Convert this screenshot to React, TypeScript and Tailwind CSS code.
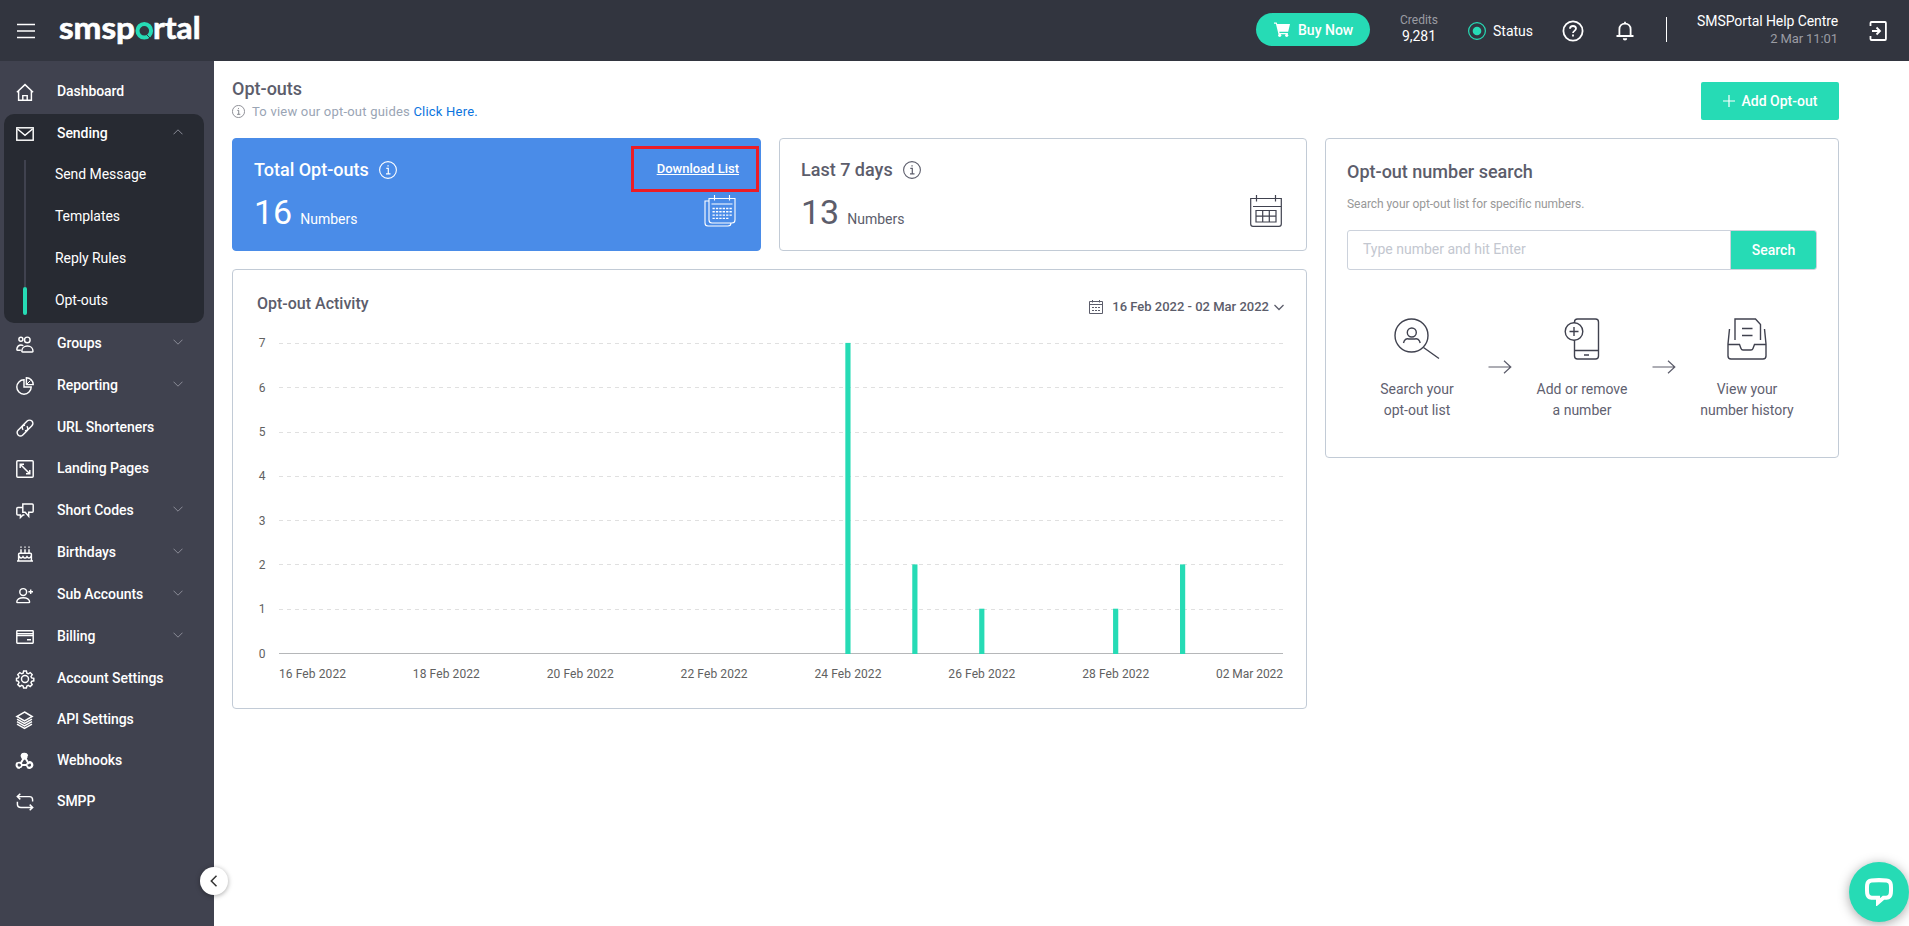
import React from "react";

type IconName =
  | "home" | "mail" | "groups" | "pie" | "link" | "landing" | "chat" | "cake"
  | "userPlus" | "card" | "gear" | "layers" | "webhook" | "loop";

const iconShapes: Record<IconName, React.ReactNode> = {
  home: (
    <>
      <path d="M.9 9.2 9 1.6l8.100 7.600" />
      <path d="M2.600 8v9.200h12.800V8M6.800 17v-4.400h4.400V17" />
    </>
  ),
  mail: (
    <>
      <rect x=".8" y="2.800" width="16.400" height="12.400" />
      <path d="m1.500 4 7.500 6.200L16.500 4" />
    </>
  ),
  groups: (
    <>
      <circle cx="4.900" cy="4.200" r="2" />
      <circle cx="11.300" cy="4.900" r="2.800" />
      <path d="M4.800 15.200H1.600c-.9 0-.8-1-.6-1.900.5-2 2-3.300 3.900-3.300 1 0 1.800.3 2.400.8" />
      <path d="M5.800 16.200c0-3 2.300-5.200 5.600-5.200s5.600 2.200 5.600 5.200c0 .5-.4.700-.8.700H6.600c-.4 0-.8-.2-.8-.7z" />
    </>
  ),
  pie: (
    <>
      <path d="M8 2.800A7.200 7.200 0 1 0 15.200 10H8z" />
      <path d="M10.400.8v6.800h6.800A6.800 6.800 0 0 0 10.400.8z" />
      <path d="m10.500 7.500 4-4" strokeWidth="1" />
    </>
  ),
  link: (
    <>
      <path d="M7.200 10.800a3.300 3.300 0 0 1 0-4.700l4-4a3.300 3.300 0 0 1 4.700 4.700l-4 4a3.300 3.300 0 0 1-3 .9" />
      <path d="M10.800 7.200a3.300 3.300 0 0 1 0 4.700l-4 4a3.300 3.300 0 0 1-4.700-4.700l4-4a3.300 3.300 0 0 1 3-.9" />
    </>
  ),
  landing: (
    <>
      <rect x=".8" y=".8" width="16.400" height="16.400" rx="1" />
      <path d="m4.500 4.500 9 9M4.200 8V4.200H8M10 13.800h3.800V10" />
    </>
  ),
  chat: (
    <>
      <path d="M6.800 2h9.400c.6 0 1 .4 1 1v6.300c0 .6-.4 1-1 1h-3.500v4l-3.500-4H6.800V2z" />
      <path d="M6.800 5.400H1.800c-.6 0-1 .4-1 1V12c0 .6.400 1 1 1h2.600v2.500L7 13h1.400" />
    </>
  ),
  cake: (
    <>
      <path d="M1 17h16M2.600 16.500v-6.300c0-.6.400-1 1-1h10.800c.6 0 1 .4 1 1v6.300M2.800 12c1.600 2.600 3 2.600 4.200.6 1.200 2 2.800 2 4 0 1.200 2 2.800 2 4.200-.6M5 9V5.200M9 9V5.200M13 9V5.200M5 3.700V2.500M9 3.700V2.500M13 3.700V2.500" />
    </>
  ),
  userPlus: (
    <>
      <circle cx="7.200" cy="6" r="3.400" />
      <path d="M.8 16c0-2.500 2.600-4.300 6.400-4.300s6.400 1.800 6.400 4.300c0 .4-.3.600-.6.600H1.400c-.4 0-.6-.2-.6-.6z" />
      <path d="M14.700 3.500v4.600M12.400 5.800H17" />
    </>
  ),
  card: (
    <>
      <rect x=".8" y="2.800" width="16.400" height="12.400" rx=".6" />
      <path d="M1 5.600h16M1 7.400h16M11 11.800h4" />
    </>
  ),
  gear: (
    <>
      <circle cx="9" cy="9" r="3.500" />
      <path d="M7.600 1h2.800l.5 2.200 1.400.6 1.900-1.200 2 2-1.200 1.900.6 1.400 2.200.5v2.400l-2.200.5-.6 1.400 1.200 1.900-2 2-1.900-1.200-1.400.6-.5 2H7.600l-.5-2-1.400-.6-1.900 1.200-2-2L3 12.700l-.6-1.400-1.900-.5V8.400l1.900-.5L3 6.500 1.800 4.600l2-2 1.900 1.200 1.400-.6z" />
    </>
  ),
  layers: (
    <>
      <path d="m8.500 1 7.700 4.500-7.700 4.500L.8 5.500z" />
      <path d="m1 8.200 7.500 4.300L16 8.200M1 10.700l7.500 4.300L16 10.700M1 13.200l7.500 4.100 7.500-4.100" />
    </>
  ),
  webhook: (
    <>
      <circle cx="8.300" cy="4.300" r="2.600" fill="#fff" />
      <circle cx="3.300" cy="13" r="2.500" />
      <circle cx="13.300" cy="13" r="2.500" />
      <path d="M7.600 6.500 4.200 12M9 5.500l4 6.500M5 13h6" strokeWidth="2" />
      <path d="M5.200 4.500a3.200 3.200 0 0 1 6.300-.6M1.200 10.800a3.200 3.200 0 0 0 2.500 5.400M12.800 9.900a3.200 3.200 0 1 1-1.500 5.500" />
    </>
  ),
  loop: (
    <>
      <path d="M4.300.8 1.300 3.600l3 2.800M1.500 3.600h12c2 0 3.100 1.200 3.100 3.200v1.800" />
      <path d="m13.700 11.600 3 2.800-3 2.800M16.500 14.400H5c-2 0-3.600-1.200-3.600-3.200V8.800" />
    </>
  ),
};

function SideIcon({ name }: { name: IconName }) {
  return (
    <svg className="mt-[2px] h-[18px] w-[18px] shrink-0 overflow-visible" viewBox="0 0 18 18" fill="none" stroke="#fff" strokeWidth="1.450">
      {iconShapes[name]}
    </svg>
  );
}

function Chevron({ up = false }: { up?: boolean }) {
  return (
    <svg className="mt-[6px] ml-auto h-[6px] w-[10px]" viewBox="0 0 10 6" fill="none" stroke="#8a8c97" strokeWidth="1">
      <path d={up ? "M.5 5.300 5 .8l4.500 4.500" : "M.5.700 5 5.200 9.500.7"} />
    </svg>
  );
}

const menu: { label: string; icon: IconName; group?: boolean; tall?: boolean }[] = [
  { label: "Groups", icon: "groups", group: true },
  { label: "Reporting", icon: "pie", group: true },
  { label: "URL Shorteners", icon: "link" },
  { label: "Landing Pages", icon: "landing", tall: true },
  { label: "Short Codes", icon: "chat", group: true },
  { label: "Birthdays", icon: "cake", group: true },
  { label: "Sub Accounts", icon: "userPlus", group: true },
  { label: "Billing", icon: "card", group: true },
  { label: "Account Settings", icon: "gear" },
  { label: "API Settings", icon: "layers" },
  { label: "Webhooks", icon: "webhook" },
  { label: "SMPP", icon: "loop" },
];

const sendingItems = ["Send Message", "Templates", "Reply Rules", "Opt-outs"];

function Sidebar() {
  return (
    <aside className="relative w-[214px] shrink-0 bg-[#40424f] text-sm font-medium text-white">
      <div className="flex h-[53px] items-start gap-[23px] pt-5 pl-4 leading-5 tracking-[-0.06px]">
        <SideIcon name="home" />
        <span>Dashboard</span>
      </div>
      <div className="ml-1 h-[209px] w-[200px] rounded-[10px] bg-[#272a32]">
        <div className="flex h-[39px] items-start gap-[23px] pt-[9px] pr-[21px] pl-3 leading-5 tracking-[-0.06px]">
          <SideIcon name="mail" />
          <span>Sending</span>
          <Chevron up />
        </div>
        <div className="flex font-normal">
          <div className="ml-[19px] flex w-1 flex-col items-center pt-[7px]">
            <div className="h-[127px] w-[2px] bg-[#40424f]" />
            <div className="h-[28px] w-1 rounded-[2px] bg-[#26dbb5]" />
          </div>
          <ul className="ml-[28px]">
            {sendingItems.map((item) => (
              <li key={item} className="h-[42px] pt-[11px] leading-5 tracking-[-0.06px]">{item}</li>
            ))}
          </ul>
        </div>
      </div>
      <nav>
        {menu.map((item) => (
          <div key={item.label} className={`flex items-start gap-[23px] pt-[10px] pr-[31px] pl-4 leading-5 tracking-[-0.06px] ${item.group || item.tall ? "h-[42px]" : "h-[41px]"}`}>
            <SideIcon name={item.icon} />
            <span>{item.label}</span>
            {item.group && <Chevron />}
          </div>
        ))}
      </nav>
      <button className="absolute top-[806px] left-[200px] flex h-7 w-7 items-center justify-center rounded-full bg-white shadow-[0_1px_5px_rgba(0,0,0,0.35)]">
        <svg className="h-3 w-2" viewBox="0 0 8 12" fill="none" stroke="#333" strokeWidth="1.500">
          <path d="M6.500.8 1.300 6l5.200 5.200" />
        </svg>
      </button>
    </aside>
  );
}

function Logo() {
  return (
    <div className="ml-6 flex h-[61px] w-[142px] items-center">
      <svg className="h-[61px] w-[142px] overflow-visible" viewBox="0 0 142 61">
        <g fill="#fff" stroke="#fff" strokeWidth=".7" fontFamily="Lato" fontWeight="700" fontSize="31">
          <text x="0" y="39" textLength="76" lengthAdjust="spacingAndGlyphs">smsp</text>
          <text x="94" y="39" textLength="47.500" lengthAdjust="spacingAndGlyphs">rtal</text>
        </g>
        <circle cx="85.300" cy="30.800" r="6.800" fill="none" stroke="#26dbb5" strokeWidth="4" />
        <path d="m87 34 4 4" stroke="#32353f" strokeWidth="1" />
      </svg>
    </div>
  );
}

function Header() {
  return (
    <header className="flex h-[61px] items-center bg-[#32353f] text-white">
      <svg className="ml-[17px] h-4 w-[18px] shrink-0" viewBox="0 0 18 16" stroke="#fff" strokeWidth="1.300">
        <path d="M0 1.500h18M0 8h18M0 14.500h18" />
      </svg>
      <Logo />
      <button className="mb-[2px] ml-auto flex h-[33px] w-[114px] items-center gap-[8px] rounded-full bg-[#26dbb5] pl-[18px] text-sm font-medium">
        <svg className="h-[15px] w-4" viewBox="0 0 16 15" fill="#fff">
          <path d="M0 .5h2.700l.5 1.600H16l-1.800 7.700H5.300l.3 1.200h8.300v1.200H4.500L1.900 1.800H0z" />
          <circle cx="5.700" cy="13.300" r="1.600" />
          <circle cx="12.700" cy="13.300" r="1.600" />
        </svg>
        Buy Now
      </button>
      <div className="ml-[29px] flex w-10 flex-col items-center pb-[5px]">
        <span className="text-xs leading-4 text-[#9a9ca3]">Credits</span>
        <span className="text-sm leading-4">9,281</span>
      </div>
      <svg className="ml-[29px] h-[18px] w-[18px]" viewBox="0 0 18 18">
        <circle cx="9" cy="9" r="8.400" fill="none" stroke="#26dbb5" strokeWidth="1.200" />
        <circle cx="9" cy="9" r="4.300" fill="#26dbb5" />
      </svg>
      <span className="ml-[7px] w-[40px] text-sm">Status</span>
      <svg className="ml-[29px] h-[22px] w-[22px]" viewBox="0 0 22 22" fill="none" stroke="#fff" strokeWidth="1.800">
        <circle cx="11" cy="11" r="9.600" />
        <path d="M8 8.800C8 7 9.300 6 11 6s3 1 3 2.600c0 2.200-3 2.300-3 4.400M11 14.600v1.800" />
      </svg>
      <svg className="ml-[32px] h-[20px] w-[18px]" viewBox="0 0 18 20">
        <path d="M3.400 14.800V8.200C3.400 5 5.800 2.600 9 2.600s5.600 2.400 5.600 5.600v6.600M.5 15h17M9 .8v2" fill="none" stroke="#fff" strokeWidth="1.800" />
        <path d="M6.800 17.300h4.400a2.200 2.200 0 0 1-4.400 0z" fill="#fff" />
      </svg>
      <div className="mb-[2px] ml-[32px] h-[25px] w-px bg-white" />
      <div className="ml-[10px] flex w-[161px] flex-col items-end pb-px">
        <span className="text-sm leading-[17px] tracking-[-0.09px]">SMSPortal Help Centre</span>
        <span className="text-[13px] leading-[17px] tracking-[-0.1px] text-[#9a9ca3]">2 Mar 11:01</span>
      </div>
      <svg className="mr-[22px] ml-[31px] h-[20px] w-[18px]" viewBox="0 0 18 20" fill="none" stroke="#fff" strokeWidth="1.800">
        <path d="M1.500 5V2c0-.6.400-1 1-1H16c.5 0 .9.400.9 1v16c0 .6-.4 1-.9 1H2.500c-.6 0-1-.4-1-1v-3M3 10h7.500M7.500 6.500 11 10l-3.500 3.500" />
      </svg>
    </header>
  );
}

function Info({ className, color }: { className: string; color: string }) {
  return (
    <svg className={className} viewBox="0 0 18 18" fill="none" stroke={color} strokeWidth="1.100">
      <circle cx="9" cy="9" r="8.400" />
      <path d="M7.300 7.400h2v5.400M7 12.900h4.500M8.400 4.800h1.300" strokeWidth="1.200" />
    </svg>
  );
}

function CalendarStack() {
  return (
    <svg className="h-[32px] w-[32px]" viewBox="0 0 32 32" fill="none" stroke="#fff" strokeWidth="1.100">
      <path d="M5 3.500h26V25c0 2-1 3-3 3H8c-2 0-3-1-3-3zM7.500 9h21M10.500 0v5.500M25.500 0v5.500M5 6H1v22c0 2 1 3 3 3h20c2 0 3-1 3-3" />
      <path d="M8.500 13.500H28M8.500 16.800H28M8.500 20.100H28M8.500 23.400h16" strokeWidth="1.400" strokeDasharray="2.300 1.100" />
    </svg>
  );
}

function CalendarGrid() {
  return (
    <svg className="h-[32px] w-[32px]" viewBox="0 0 32 32" fill="none" stroke="#40424f" strokeWidth="1.200">
      <path d="M.7 3.500h30.600V29c0 1.400-.9 2.300-2.300 2.300H3c-1.400 0-2.300-.9-2.300-2.300zM3 11.500h28M6.500 0v6.500M25.500 0v6.500" />
      <path d="M6 15.500h20V27H6zM6 21.200h20M12.700 15.500V27M19.300 15.500V27" />
    </svg>
  );
}

const values = [0, 0, 0, 0, 0, 0, 0, 0, 7, 2, 1, 0, 1, 2, 0];
const dateLabels = ["16 Feb 2022", "18 Feb 2022", "20 Feb 2022", "22 Feb 2022", "24 Feb 2022", "26 Feb 2022", "28 Feb 2022", "02 Mar 2022"];

function Chart() {
  const left = 46;
  const base = 330.5;
  const unit = 44.3;
  const step = 1004 / 15;
  return (
    <svg className="block h-[370px] w-[1073px]" viewBox="0 0 1073 370" fontSize="12" fill="#616161">
      {[1, 2, 3, 4, 5, 6, 7].map((n) => (
        <line key={n} x1={left} x2={left + 1004} y1={Math.floor(base - n * unit) + 0.5} y2={Math.floor(base - n * unit) + 0.5} stroke="#e0e0e0" strokeDasharray="4 4" />
      ))}
      {[0, 1, 2, 3, 4, 5, 6, 7].map((n) => (
        <text key={n} x="32.500" y={base - n * unit + 4} textAnchor="end">{n}</text>
      ))}
      <line x1={left} x2={left + 1004} y1={base} y2={base} stroke="#b5b7b9" />
      {values.map((v, i) => v > 0 && (
        <rect key={i} x={left + step * (i + 0.5) - 2.6} y={base - v * unit - 0.5} width="5.200" height={v * unit + 1} fill="#26dbb5" />
      ))}
      {dateLabels.map((d, i) => (
        <text key={d} x={left + step * (i * 2 + 0.5)} y="355" textAnchor="middle" textLength="67">{d}</text>
      ))}
    </svg>
  );
}

function StepArrow() {
  return (
    <svg className="mt-[42px] h-[14px] w-[24px] shrink-0" viewBox="0 0 24 14" fill="none" stroke="#5c5d6b" strokeWidth="1.200">
      <path d="M.5 7h22.300M16 .8 22.800 7 16 13.200" />
    </svg>
  );
}

function Step({ lines, children }: { lines: [string, string]; children: React.ReactNode }) {
  return (
    <div className="flex w-[100px] flex-col items-center text-center text-sm leading-[21px] text-[#5f6170]">
      <svg className="mb-[19px] h-[42px] w-[46px]" viewBox="0 0 46 42" fill="none" stroke="#40424f" strokeWidth="1.400">
        {children}
      </svg>
      <span>{lines[0]}</span>
      <span>{lines[1]}</span>
    </div>
  );
}

function SearchCard() {
  return (
    <section className="h-[320px] w-[514px] rounded-[4px] border border-[#c2cbd6] px-[21px]">
      <h2 className="mt-[21px] text-lg leading-6 font-medium text-[#5c5d6b]">Opt-out number search</h2>
      <p className="mt-[11px] text-xs leading-[18px] tracking-[-0.04px] text-[#989898]">Search your opt-out list for specific numbers.</p>
      <div className="mt-[17px] flex h-10 w-[470px] overflow-hidden rounded-[3px] border border-[#ccd2dc]">
        <div className="w-[383px] border-r border-[#ccd2dc] pl-[15px] text-sm leading-[37px] text-[#c3c7d0]">Type number and hit Enter</div>
        <button className="flex-1 bg-[#26dbb5] text-sm font-medium text-white">Search</button>
      </div>
      <div className="mt-[48px] flex pl-5">
        <Step lines={["Search your", "opt-out list"]}>
          <circle cx="17.500" cy="17.500" r="16.500" />
          <circle cx="17.800" cy="14.500" r="4.500" />
          <path d="M9.500 25c.7-3.200 3-5 5.300-4h5.900c2.500-1 4.800.800 5.500 4M29.500 29.500 45 40.500" />
        </Step>
        <div className="ml-[21px]"><StepArrow /></div>
        <div className="ml-[20px]">
          <Step lines={["Add or remove", "a number"]}>
            <path d="M15.500 5V4c0-2 1-3 3-3h18c2 0 3 1 3 3v34c0 2-1 3-3 3h-18c-2 0-3-1-3-3V22M15.500 32.500h24M25 37h5" />
            <circle cx="15" cy="13.500" r="8.800" />
            <path d="M10.500 13.500h9M15 9v9" />
          </Step>
        </div>
        <div className="ml-[20px]"><StepArrow /></div>
        <div className="ml-[21px]">
          <Step lines={["View your", "number history"]}>
            <path d="M11 22V1h20.500l5 5.500V22M5.500 11 4 26v12c0 2 1 3 3 3h32c2 0 3-1 3-3V26l-1.500-15M4 26.500h11.500l1.500 4c.4 1 1 1.500 2 1.500h8c1 0 1.600-.5 2-1.500l1.500-4H42M18 10.500h10.500M18 17.500h10.500" />
          </Step>
        </div>
      </div>
    </section>
  );
}

function StatCard({ title, value, blue = false, children }: { title: string; value: string; blue?: boolean; children: React.ReactNode }) {
  return (
    <section className={`flex h-[113px] justify-between rounded-[4px] border pr-[24px] pl-[21px] ${blue ? "w-[529px] border-[#4a8ce8] bg-[#4a8ce8] text-white" : "w-[528px] border-[#c2cbd6] text-[#5c5d6b]"}`}>
      <div>
        <div className="mt-[19px] flex items-center gap-[10px]">
          <h2 className="text-lg leading-6 font-medium">{title}</h2>
          <Info className="h-[18px] w-[18px]" color={blue ? "#fff" : "#5c5d6b"} />
        </div>
        <div className="mt-[9px] flex items-baseline gap-[8px]">
          <span className="text-[34px] leading-[42px]">{value}</span>
          <span className="text-sm">Numbers</span>
        </div>
      </div>
      {children}
    </section>
  );
}

export default function App() {
  return (
    <div className="relative flex h-[926px] w-[1909px] flex-col overflow-hidden bg-white font-[Roboto,sans-serif]">
      <Header />
      <div className="flex flex-1">
        <Sidebar />
        <main className="w-[1625px] pl-[18px]">
          <div className="flex h-[77px] justify-between">
            <div>
              <h1 className="mt-[16px] text-lg leading-6 font-medium text-[#5c5d6b]">Opt-outs</h1>
              <p className="flex items-center text-[13px] leading-[21px] tracking-[0.210px] text-[#9aa5b5]">
                <Info className="mr-[7px] h-[13px] w-[13px]" color="#75777f" />
                To view our opt-out guides&nbsp;<a className="text-[#0b74de]">Click Here.</a>
              </p>
            </div>
            <button className="mt-[21px] flex h-[38px] w-[138px] items-center justify-center gap-[7px] rounded-[2px] bg-[#26dbb5] text-sm font-medium text-white">
              <svg className="h-3 w-3" viewBox="0 0 12 12" stroke="#fff" strokeWidth="1.200"><path d="M6 0v12M0 6h12" /></svg>
              Add Opt-out
            </button>
          </div>
          <div className="flex items-start gap-[18px]">
            <div className="flex w-[1075px] flex-col gap-[18px]">
              <div className="flex gap-[18px]">
                <StatCard title="Total Opt-outs" value="16" blue>
                  <div className="relative flex flex-col items-end">
                    <a className="mt-[20px] mr-[-3px] text-[13px] leading-5 font-medium underline">Download List</a>
                    <div className="mt-[16px]"><CalendarStack /></div>
                    <div className="absolute top-[7px] right-[-23px] h-[46px] w-[128px] border-3 border-[#ed1c24]" />
                  </div>
                </StatCard>
                <StatCard title="Last 7 days" value="13">
                  <div className="mt-[56px]"><CalendarGrid /></div>
                </StatCard>
              </div>
              <section className="h-[440px] rounded-[4px] border border-[#c2cbd6]">
                <div className="flex h-[53px] items-start justify-between pr-[22px] pl-6">
                  <h2 className="mt-[22px] text-base leading-6 font-medium text-[#5c5d6b]">Opt-out Activity</h2>
                  <div className="mt-[27px] flex items-center text-[13px] leading-5 font-medium text-[#5c5d6b]">
                    <svg className="mr-[9px] h-[14px] w-[14px]" viewBox="0 0 14 14" fill="none" stroke="#5c5d6b">
                      <path d="M.5 1.500h13v12H.5zM.5 4.500h13M3.500 0v2.500M10.500 0v2.500" />
                      <path d="M3 7.500h8.500M3 10.500h8.500" strokeDasharray="2 1" />
                    </svg>
                    16 Feb 2022 - 02 Mar 2022
                    <svg className="ml-[5px] h-[7px] w-[10px]" viewBox="0 0 10 7" fill="none" stroke="#5c5d6b" strokeWidth="1.300"><path d="m.5 1 4.500 4.500L9.500 1" /></svg>
                  </div>
                </div>
                <Chart />
              </section>
            </div>
            <SearchCard />
          </div>
        </main>
      </div>
      <button className="absolute top-[862px] left-[1849px] flex h-[60px] w-[60px] items-center justify-center rounded-full bg-[#26dbb5] shadow-[0_2px_12px_rgba(0,0,0,0.350)]">
        <svg className="h-7 w-7" viewBox="0 0 28 28" fill="none" stroke="#fff" strokeWidth="4">
          <path d="M6.500 2.500c5-.5 10-.5 15 0 2.500.2 4 1.500 4.300 4 .3 3 .3 6 0 9-.3 2.500-1.800 4-4.300 4.300h-3l-5.500 4.700v-4.700h-6.500C4 19.500 2.500 18 2.200 15.500c-.3-3-.3-6 0-9 .3-2.500 1.800-3.800 4.300-4z" />
        </svg>
      </button>
    </div>
  );
}
